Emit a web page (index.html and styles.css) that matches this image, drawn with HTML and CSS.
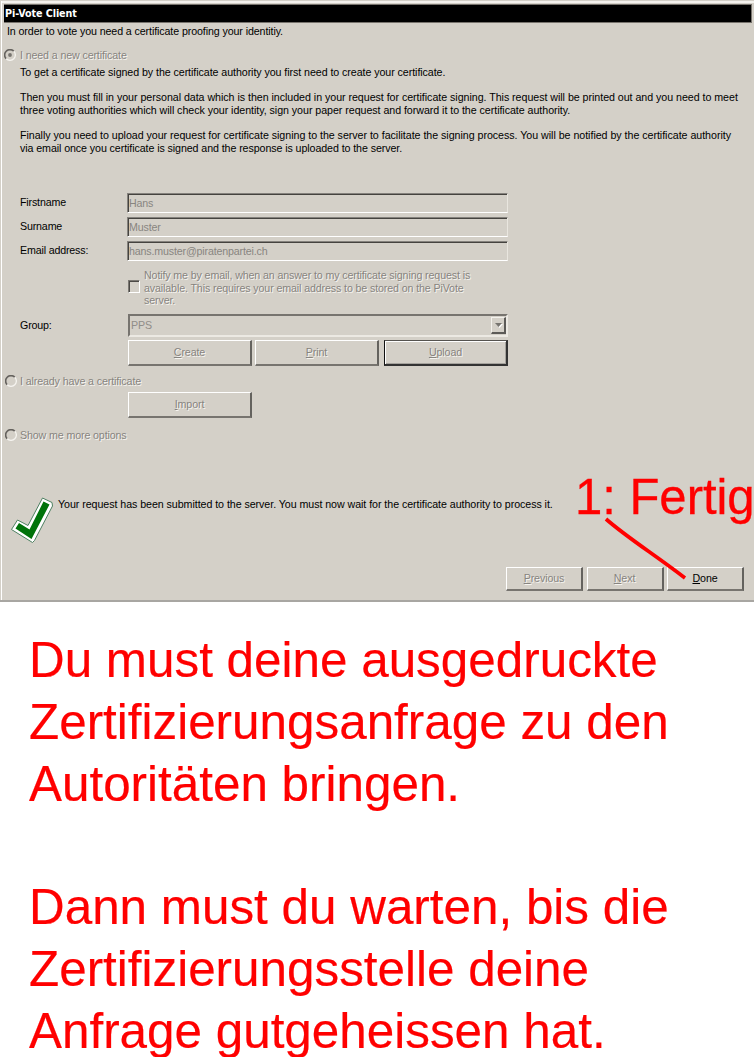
FILE: index.html
```
<!DOCTYPE html>
<html lang="en">
<head>
<meta charset="utf-8">
<title>Pi-Vote Client</title>
<link rel="stylesheet" href="styles.css">
</head>
<body>
<main class="window">
  <header class="titlebar">Pi-Vote Client</header>
  <p class="intro">In order to vote you need a certificate proofing your identitiy.</p>
  <div class="option option-new"><svg class="radio" viewBox="0 0 12 12"><path class="r-dark" d="M2.2 9.8A5 5 0 0 1 9.8 2.2"/><path class="r-light" d="M9.8 2.2A5 5 0 0 1 2.2 9.8"/><circle class="r-dot" cx="6" cy="6" r="1.9"/></svg><span class="disabled t-new">I need a new certificate</span></div>
  <section class="explain">
    <p><span class="l1">To get a certificate signed by the certificate authority you first need to create your certificate.</span></p>
    <p><span class="l2">Then you must fill in your personal data which is then included in your request for certificate signing. This request will be printed out and you need to meet</span><span class="l3">three voting authorities which will check your identity, sign your paper request and forward it to the certificate authority.</span></p>
    <p><span class="l4">Finally you need to upload your request for certificate signing to the server to facilitate the signing process. You will be notified by the certificate authority</span><span class="l5">via email once you certificate is signed and the response is uploaded to the server.</span></p>
  </section>
  <section class="form">
    <div class="row"><label>Firstname</label><div class="field">Hans</div></div>
    <div class="row"><label>Surname</label><div class="field">Muster</div></div>
    <div class="row"><label>Email address:</label><div class="field">hans.muster@piratenpartei.ch</div></div>
    <div class="notify"><i class="checkbox"></i><p class="disabled"><span>Notify me by email, when an answer to my certificate signing request is</span><span>available. This requires your email address to be stored on the PiVote</span><span>server.</span></p></div>
    <div class="row group"><label>Group:</label><div class="combo"><span>PPS</span><b class="drop"><svg viewBox="0 0 7 4"><path d="M0 0H7L3.5 4Z"/></svg></b></div></div>
    <div class="actions"><div class="button disabled"><span><u>C</u>reate</span></div><div class="button disabled"><span><u>P</u>rint</span></div><div class="button default disabled"><span><u>U</u>pload</span></div></div>
  </section>
  <div class="option option-have"><svg class="radio" viewBox="0 0 12 12"><path class="r-dark" d="M2.2 9.8A5 5 0 0 1 9.8 2.2"/><path class="r-light" d="M9.8 2.2A5 5 0 0 1 2.2 9.8"/></svg><span class="disabled">I already have a certificate</span></div>
  <div class="import"><div class="button disabled"><span><u>I</u>mport</span></div></div>
  <div class="option option-more"><svg class="radio" viewBox="0 0 12 12"><path class="r-dark" d="M2.2 9.8A5 5 0 0 1 9.8 2.2"/><path class="r-light" d="M9.8 2.2A5 5 0 0 1 2.2 9.8"/></svg><span class="disabled">Show me more options</span></div>
  <div class="status">
    <svg class="check" viewBox="0 0 44 48"><path class="check-edge" d="M31.5 1L41 5.5L41.5 9L23.5 43.5L21.5 45.5L0.5 32.5L6.5 23L17 28.5Z"/><path class="check-fill" d="M32.5 4.5L38.5 7.5L20.5 42L4.5 31.5L8 26L18.5 32.5Z"/></svg>
    <p>Your request has been submitted to the server. You must now wait for the certificate authority to process it.</p>
  </div>
  <footer class="footer"><div class="button disabled"><span><u>P</u>revious</span></div><div class="button disabled"><span><u>N</u>ext</span></div><div class="button"><span><u>D</u>one</span></div></footer>
  <div class="callout">1: Fertig</div>
  <svg class="pointer" viewBox="0 0 84 64"><path d="M3 3C22 20 52 39 82 62"/></svg>
</main>
<article class="notes">
  <p><span>Du must deine ausgedruckte</span><span>Zertifizierungsanfrage zu den</span><span>Autoritäten bringen.</span></p>
  <p><span>Dann must du warten, bis die</span><span>Zertifizierungsstelle deine</span><span>Anfrage gutgeheissen hat.</span></p>
</article>
</body>
</html>
```
FILE: styles.css
```
* { box-sizing: border-box; }
body { margin: 0; background: #fff; font: 10.67px/13px "Liberation Sans", Arial, sans-serif; color: #000; }
p { margin: 0; white-space: nowrap; }
p > span { display: block; width: max-content; }
.window { position: relative; height: 602px; overflow: hidden; background: #d4d0c8; padding: 3px 2px 0 4px; border-top: 1px solid #d4d0c8; border-bottom: 2px solid #a8a6a2; box-shadow: inset 1px 0 #d4d0c8, inset 2px 0 #fff, inset 0 2px #f4f2ee; }
.titlebar { height: 19px; background: #000; border: 1px solid #77736d; border-left: 0; color: #fff; font: bold 10.67px/17px "DejaVu Sans Condensed", "DejaVu Sans", sans-serif; padding-left: 1px; letter-spacing: -.08px; }
.intro { margin: 2px 0 0 3px; letter-spacing: -.1px; }
.option { display: flex; align-items: center; height: 14px; gap: 4px; white-space: nowrap; letter-spacing: -.12px; }
.option-new { margin-top: 10px; }
.radio { width: 12px; height: 12px; flex: none; fill: none; }
.r-dark { stroke: #65625e; stroke-width: 1.6; }
.r-light { stroke: #f5f3ef; stroke-width: 1.3; }
.r-dot { fill: #77746f; }
.disabled { color: #87847f; text-shadow: 1px 1px #f6f4f0; }
.explain { margin: 4px 0 0 16px; display: flex; flex-direction: column; gap: 12px; }
.l1 { letter-spacing: -.065px; }
.l2 { letter-spacing: -.037px; }
.l3 { letter-spacing: -.045px; }
.l4 { letter-spacing: -.032px; }
.l5 { letter-spacing: -.085px; }
.form { margin: 38px 0 0 16px; display: flex; flex-direction: column; }
.row { display: grid; grid-template-columns: 107px 381px; height: 20px; margin-bottom: 4px; align-items: center; letter-spacing: -.16px; }
.row label { padding-bottom: 2px; }
.field { height: 20px; border: 1px solid #85827d; border-right-color: #e9e6df; border-bottom-color: #fff; box-shadow: inset 1px 1px #45433f; padding: 3px 0 0 1px; color: #888580; line-height: 13px; }
.notify { display: flex; height: 40px; margin: 4px 0 0 108px; gap: 4px; letter-spacing: -.12px; }
.checkbox { width: 12px; height: 13px; margin-top: 11px; border: 1px solid #7b7873; border-right-color: #fff; border-bottom-color: #fff; box-shadow: inset 1px 1px #4b4945; flex: none; }
.notify span { line-height: 12.5px; }
.row.group { grid-template-columns: 108px 380px; height: 23px; margin: 5px 0 3px; }
.row.group label { padding-bottom: 1px; }
.combo { height: 23px; border: 2px solid #77746f; border-right-color: #ece9e3; border-bottom-color: #ece9e3; padding: 0 0 1px 1px; display: flex; align-items: center; justify-content: space-between; color: #908d88; }
.drop { width: 15px; height: 17px; border: 1px solid #f3f1ec; border-right: 2px solid #5c5a57; border-bottom: 2px solid #5c5a57; display: flex; align-items: center; justify-content: center; }
.drop svg { width: 7px; height: 4px; fill: #77746f; filter: drop-shadow(1px 1px #fff); }
.actions { display: grid; grid-template-columns: 124px 124px 124px; justify-content: start; column-gap: 3px; margin-left: 108px; }
.button { height: 26px; border: 1px solid #fff; border-right: 2px solid #64625e; border-bottom: 2px solid #77746f; display: flex; align-items: center; justify-content: center; }
.button span { letter-spacing: -.1px; }
.default { margin: 0 -2px 0 2px; border: 1px solid #111; border-top-color: #55534f; border-right: 2px solid #333; border-bottom: 2px solid #333; box-shadow: inset 1px 1px #fff, inset -1px -1px #a5a29d; }
.option-have { margin: 8px 0 0 1px; }
.option-have, .option-more { gap: 3px; }
.import { margin: 4px 0 0 124px; width: 124px; }
.option-more { margin: 10px 0 0 1px; }
.status { display: flex; margin: 55px 0 0 7px; gap: 3px; height: 48px; }
.status p { padding-top: 1px; letter-spacing: -.055px; }
.check { width: 44px; height: 48px; flex: none; }
.check-edge { fill: #fff; stroke: #4d8061; stroke-width: 1; stroke-linejoin: round; }
.check-fill { fill: #00730a; }
.footer { display: grid; grid-template-columns: 77px 77px 77px; gap: 3.5px; justify-content: end; margin: 22px 8px 0 0; }
.footer .button { height: 24px; }
.callout { position: absolute; left: 575px; top: 467px; font-size: 49.1px; line-height: 58px; letter-spacing: -.05px; color: #f00; white-space: nowrap; -webkit-text-stroke: .3px #f00; }
.pointer { position: absolute; left: 603px; top: 515px; width: 84px; height: 64px; fill: none; stroke: #f00; stroke-width: 3.7; }
.notes { padding: 27px 0 0 29px; font-size: 49.4px; line-height: 61.75px; color: #f00; display: flex; flex-direction: column; gap: 61.75px; height: 455px; overflow: hidden; -webkit-text-stroke: .2px #f00; }
```
